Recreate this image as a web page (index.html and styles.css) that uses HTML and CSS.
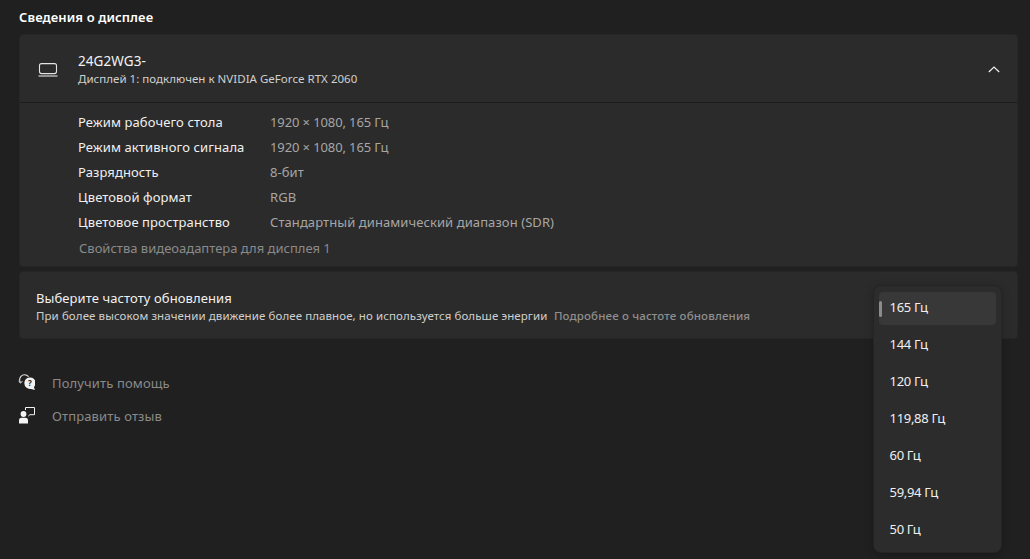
FILE: index.html
```html
<!DOCTYPE html>
<html lang="ru">
<head>
<meta charset="utf-8">
<title>Сведения о дисплее</title>
<link rel="stylesheet" href="styles.css">
</head>
<body>
<h2 class="section-title">Сведения о дисплее</h2>
<section class="card display-card">
  <header class="display-head">
    <svg class="laptop" width="20" height="14" viewBox="0 0 20 14" fill="none" stroke="#e4e4e4" stroke-width="1.1"><rect x="1.5" y="0.6" width="17" height="10" rx="2"/><path d="M0.5 13h19"/></svg>
    <div class="head-text">
      <div class="display-name">24G2WG3-</div>
      <div class="display-sub">Дисплей 1: подключен к NVIDIA GeForce RTX 2060</div>
    </div>
    <svg class="chevron" width="12" height="7" viewBox="0 0 12 7" fill="none" stroke="#eee" stroke-width="1.2"><path d="M0.8 6L6 1l5.2 5"/></svg>
  </header>
  <div class="details">
    <div class="row"><span class="label">Режим рабочего стола</span><span class="value num">1920 × 1080, 165 Гц</span></div>
    <div class="row"><span class="label">Режим активного сигнала</span><span class="value num">1920 × 1080, 165 Гц</span></div>
    <div class="row"><span class="label">Разрядность</span><span class="value">8-бит</span></div>
    <div class="row"><span class="label">Цветовой формат</span><span class="value">RGB</span></div>
    <div class="row"><span class="label">Цветовое пространство</span><span class="value">Стандартный динамический диапазон (SDR)</span></div>
    <div class="adapter-link">Свойства видеоадаптера для дисплея 1</div>
  </div>
</section>
<section class="card refresh-card">
  <div class="refresh-title">Выберите частоту обновления</div>
  <div class="refresh-sub"><span>При более высоком значении движение более плавное, но используется больше энергии</span><span class="more">Подробнее о частоте обновления</span></div>
</section>
<nav class="links">
  <div class="link">
    <svg width="17" height="17" viewBox="0 0 17 17" fill="none"><path d="M2.6 8.5A5 5 0 0 1 1.6 6C1.6 3 3.6 .8 6.4 .8c1.8 0 3.2.7 4.2 1.9" stroke="#e8e8e8" stroke-width="1.1"/><path d="M.6 7.2l2 1.9 1.7-2" stroke="#e8e8e8" stroke-width="1"/><path d="M6.4 9a5.6 5.6 0 1 1 9.5 4l1 3-3.8-1.1A5.6 5.6 0 0 1 6.4 9z" fill="#f2f2f2"/><text x="12" y="12.2" class="q">?</text></svg>
    <span>Получить помощь</span>
  </div>
  <div class="link">
    <svg width="17" height="17" viewBox="0 0 17 17" fill="none"><circle cx="5.5" cy="7" r="2.9" fill="#f4f4f4"/><path d="M1 16.5v-3.2a2.6 2.6 0 0 1 2.6-2.6h3.8a2.6 2.6 0 0 1 2.6 2.6v3.2z" fill="#f4f4f4"/><path d="M7.5 3V.5h9v7.2h-4.6l-1.6 1.4" stroke="#f2f2f2" stroke-width="1"/></svg>
    <span>Отправить отзыв</span>
  </div>
</nav>
<div class="menu">
  <div class="opt selected">165 Гц</div>
  <div class="opt">144 Гц</div>
  <div class="opt">120 Гц</div>
  <div class="opt">119,88 Гц</div>
  <div class="opt">60 Гц</div>
  <div class="opt">59,94 Гц</div>
  <div class="opt">50 Гц</div>
</div>
</body>
</html>
```
FILE: styles.css
```css
* { box-sizing: border-box; }
html, body { height: 100%; }
body {
  margin: 0;
  padding: 0 12px 0 19px;
  background: #202020;
  color: #f2f2f2;
  font-family: "Noto Sans", "Open Sans", sans-serif;
  font-size: 13px;
  overflow: hidden;
  position: relative;
}
.section-title {
  margin: 0;
  height: 34px;
  padding-top: 8px;
  font-size: 13px;
  line-height: 18px;
  font-weight: 600;
  letter-spacing: 0.1px;
  color: #fff;
}
.card {
  background: #2b2b2b;
  border: 1px solid #262626;
  border-radius: 4px;
}
.display-card { height: 233px; }
.display-head {
  height: 68px;
  display: flex;
  align-items: center;
  padding: 0 17px 0 18px;
  border-bottom: 1px solid #1c1c1c;
}
.laptop, .chevron { margin-top: 2px; }
.head-text { margin: 3px 0 0 20px; flex: 1; }
.display-name { font-size: 13.5px; line-height: 17px; letter-spacing: 0.07px; }
.display-sub { font-size: 11.5px; line-height: 17px; color: #d0d0d0; letter-spacing: 0.03px; }
.details { padding: 6px 0 0 58px; }
.row { display: flex; height: 25px; align-items: center; }
.label { width: 192px; color: #f0f0f0; letter-spacing: 0.1px; }
.value { color: #a6a6a6; letter-spacing: 0.08px; }
.num { letter-spacing: -0.11px; }
.adapter-link { margin: 2px 0 0 1px; height: 25px; line-height: 25px; color: #8a8a8a; letter-spacing: 0; }
.refresh-card { margin-top: 4px; height: 68px; padding: 17px 0 0 16px; }
.refresh-title { font-size: 13px; line-height: 18px; letter-spacing: 0.09px; }
.refresh-sub { font-size: 11.5px; line-height: 17px; color: #cfcfcf; letter-spacing: 0.09px; display: flex; gap: 6.5px; }
.more { color: #8f8f8f; font-weight: 500; letter-spacing: 0.15px; }
.links { margin-top: 27px; margin-left: -1px; }
.link { display: flex; align-items: center; height: 33px; gap: 17px; color: #8a8a8a; letter-spacing: 0.13px; }
.q { font-size: 8px; font-weight: 700; fill: #202020; text-anchor: middle; }
.menu {
  position: absolute;
  left: 873px;
  top: 285px;
  width: 129px;
  height: 268px;
  padding: 6px 5px;
  background: #2c2c2c;
  border: 1px solid #252525;
  border-radius: 8px;
  box-shadow: 0 2px 8px rgba(0,0,0,.22);
}
.opt {
  height: 33px;
  margin-bottom: 4px;
  padding-left: 10.5px;
  line-height: 31px;
  border-radius: 4px;
  color: #f0f0f0;
  letter-spacing: -0.3px;
  position: relative;
}
.selected { background: #383838; }
.selected::before {
  content: "";
  position: absolute;
  left: 0;
  top: 9px;
  width: 3px;
  height: 16px;
  border-radius: 2px;
  background: #8c8c8c;
}
```
